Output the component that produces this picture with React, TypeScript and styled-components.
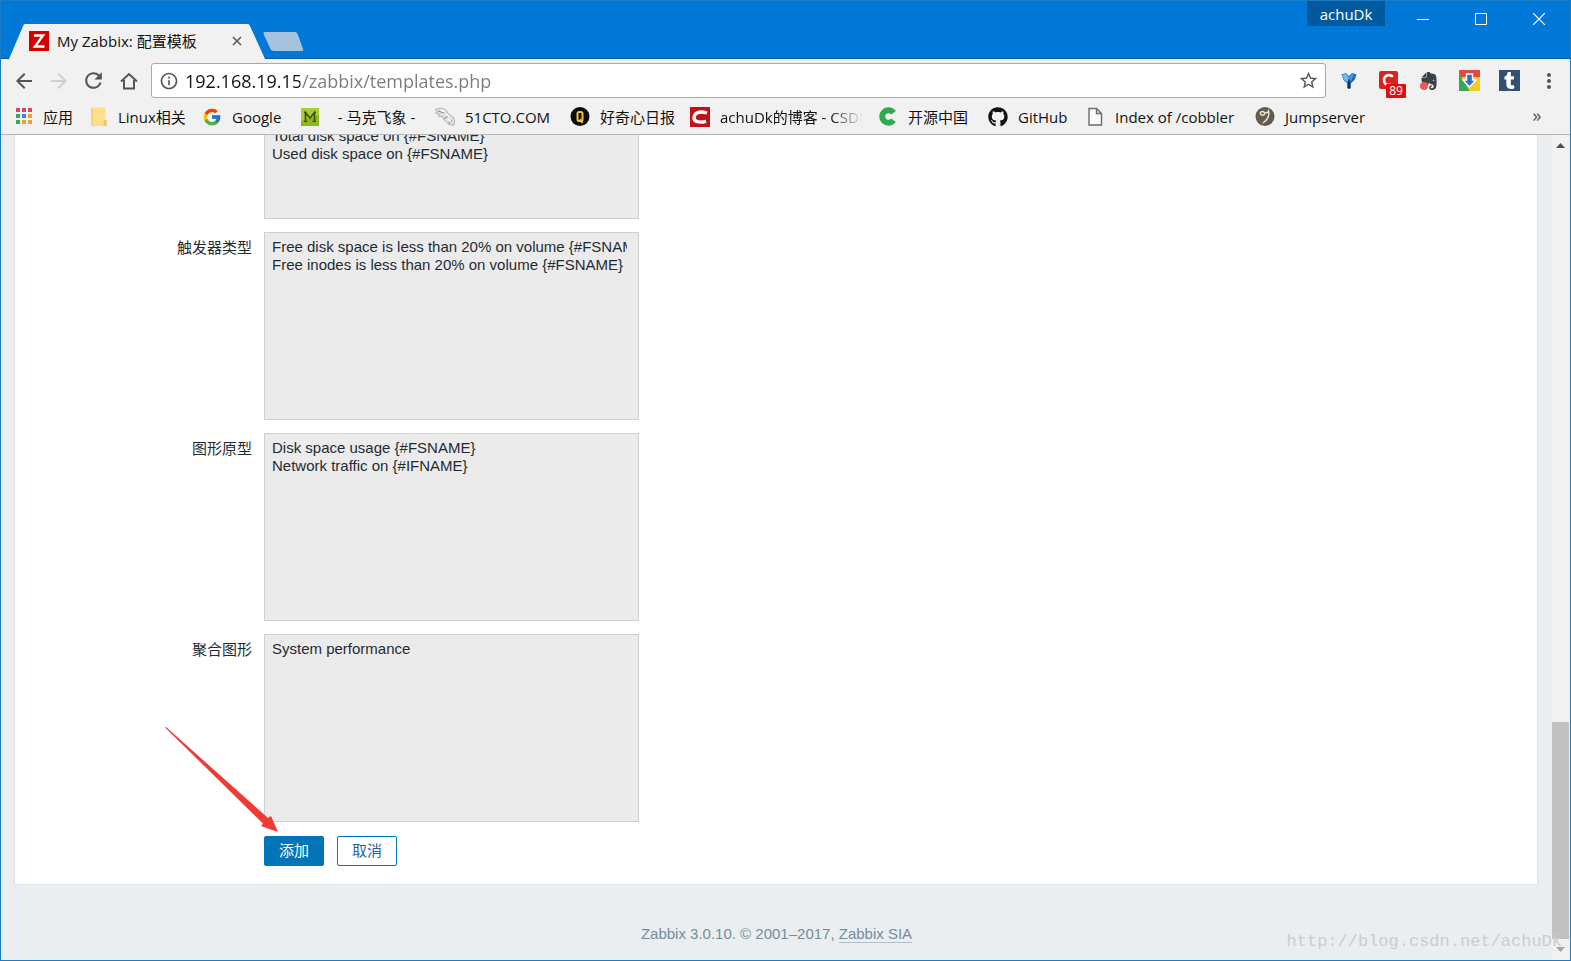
import React from 'react';
import styled, { createGlobalStyle, css } from 'styled-components';
import { MdArrowBack, MdArrowForward, MdRefresh, MdInfoOutline, MdStarBorder, MdMoreVert } from 'react-icons/md';
import { FcGoogle } from 'react-icons/fc';
import { FaGithub, FaTumblr } from 'react-icons/fa';
import { SiEvernote } from 'react-icons/si';

const uiFont = '"Open Sans", "Noto Sans CJK SC", sans-serif';
const pageFont = '"Liberation Sans", "Noto Sans CJK SC", sans-serif';

const GlobalStyle = createGlobalStyle`
  *, *::before, *::after { box-sizing: border-box; }
  body { margin: 0; }
  button, input, select { font: inherit; margin: 0; }
`;

const Window = styled.div`
  display: flex;
  flex-direction: column;
  height: 100vh;
  overflow: hidden;
  border: 1px solid #1a7cc2;
  background: #f1f1f1;
  font: 15px/20px ${uiFont};
  color: #111;
`;

/* ---------- title bar ---------- */

const TitleBar = styled.header`
  display: flex;
  flex: none;
  height: 58px;
  padding: 0 2px 0 8px;
  background: #0078d7;
  border-bottom: 1px solid #0b5a9c;
`;

const Tab = styled.div`
  position: relative;
  display: flex;
  align-items: center;
  align-self: flex-end;
  gap: 8px;
  width: 256px;
  height: 35px;
  margin-bottom: -1px;
  padding: 0 20px 2px;
`;

const TabShape = styled.svg`
  position: absolute;
  inset: 0;
`;

const TabTitle = styled.span`
  position: relative;
  flex: 1;
  white-space: nowrap;
`;

const TabIcon = styled.svg`
  position: relative;
  flex: none;
`;

const BareButton = styled.button`
  display: flex;
  align-items: center;
  justify-content: center;
  flex: none;
  padding: 0;
  border: 0;
  background: none;
  color: #555;
`;

const TabClose = styled(BareButton)`
  position: relative;
  width: 16px;
  height: 16px;
`;

const NewTab = styled(BareButton)`
  align-self: flex-end;
  align-items: flex-start;
  height: 26px;
  margin-left: -2px;
`;

const Spacer = styled.div`
  flex: 1;
`;

const UserButton = styled(BareButton)`
  width: 78px;
  height: 25px;
  margin-right: 9px;
  background: #02599d;
  color: #fff;
`;

const WindowButton = styled(BareButton)`
  width: 58px;
  height: 36px;
`;

/* ---------- toolbar ---------- */

const Toolbar = styled.nav`
  display: flex;
  align-items: center;
  flex: none;
  height: 41px;
  margin-top: 1px;
  padding: 0 1px 0 5px;
`;

const NavButton = styled(BareButton)<{ $faded?: boolean }>`
  width: 35px;
  height: 34px;
  color: ${(p) => (p.$faded ? '#cfcfcf' : '#555')};
`;

const AddressBox = styled.div`
  display: flex;
  align-items: center;
  flex: 1;
  gap: 6px;
  height: 35px;
  margin: 0 3px 0 5px;
  padding: 0 6px 0 7px;
  border: 1px solid #a9a9a9;
  border-radius: 3px;
  background: #fff;
  color: #555;
`;

const AddressInput = styled.input`
  flex: 1;
  min-width: 0;
  height: 30px;
  padding: 0;
  border: 0;
  outline: 0;
  font-size: 18px;
  background: linear-gradient(90deg, #111 115px, #7b7b7b 115px);
  background-clip: text;
  -webkit-background-clip: text;
  -webkit-text-fill-color: transparent;
`;

const ExtensionButton = styled(BareButton)`
  position: relative;
  width: 40px;
  height: 34px;
`;

const Badge = styled.span`
  position: absolute;
  left: 17px;
  top: 20px;
  width: 20px;
  height: 14px;
  border-radius: 1px;
  background: #dc1010;
  color: #fff;
  font-size: 12px;
  line-height: 14px;
  text-align: center;
`;

const RecordingDot = styled.span`
  position: absolute;
  left: 11px;
  bottom: 8px;
  width: 8px;
  height: 8px;
  border-radius: 50%;
  background: #ec5a5e;
`;

const BookmarkBar = styled.nav`
  display: flex;
  align-items: center;
  flex: none;
  gap: 15px;
  height: 34px;
  padding: 0 0 2px 12px;
  border-bottom: 1px solid #b6b6b6;
`;

const Bookmark = styled.a<{ $width: number; $fade?: boolean }>`
  display: flex;
  align-items: center;
  gap: 10px;
  width: ${(p) => p.$width}px;
  color: inherit;
  text-decoration: none;
  white-space: pre;
  ${(p) =>
    p.$fade &&
    css`
      overflow: hidden;
      mask-image: linear-gradient(90deg, #000 140px, transparent 173px);
    `}

  svg {
    flex: none;
    width: 20px;
    height: 20px;
  }
`;

const MoreButton = styled(BareButton)`
  width: 30px;
  margin: 0 18px 0 auto;
  padding-bottom: 4px;
  font-size: 18px;
`;

/* ---------- page ---------- */

const Viewport = styled.div`
  display: flex;
  flex: 1;
  min-height: 0;
  padding-right: 1px;
  background: #ebeef0;
  font: 15px/18px ${pageFont};
  color: #1f2c33;
`;

const Page = styled.div`
  display: flex;
  flex-direction: column;
  justify-content: flex-end;
  flex: 1;
  min-width: 0;
  overflow: hidden;
`;

const Card = styled.main`
  display: flex;
  flex-direction: column;
  flex: none;
  gap: 13px;
  margin: 0 14px 0 13px;
  padding: 0 0 18px;
  border: 1px solid #dfe4e7;
  border-top: 0;
  background: #fff;
`;

const FormRow = styled.div`
  display: flex;
  gap: 12px;
`;

const RowLabel = styled.label`
  width: 237px;
  padding-top: 7px;
  text-align: right;
`;

const ListBox = styled.select<{ $short?: boolean }>`
  width: 375px;
  height: ${(p) => (p.$short ? 98 : 188)}px;
  padding: 5px 11px 5px 5px;
  border: 1px solid #ccd0d2;
  border-radius: 0;
  background: #ebebeb;
  color: #1f2c33;
  opacity: 1;
  overflow: hidden;

  option {
    overflow: hidden;
    color: #1f2c33;
  }
`;

const Actions = styled.div`
  position: relative;
  display: flex;
  gap: 13px;
  margin: 1px 0 0 249px;
`;

const ActionButton = styled.button<{ $primary?: boolean }>`
  width: 60px;
  height: 30px;
  padding: 0;
  border: 1px solid #0275b8;
  border-radius: 2px;
  background: ${(p) => (p.$primary ? '#0275b8' : '#fff')};
  color: ${(p) => (p.$primary ? '#fff' : '#1f65a0')};
`;

const Pointer = styled.svg`
  position: absolute;
  left: -99px;
  bottom: 34px;
  pointer-events: none;
`;

const Footer = styled.footer`
  flex: none;
  height: 75px;
  padding-top: 40px;
  text-align: center;
  color: #768d99;
`;

const FooterLink = styled.a`
  color: inherit;
  text-decoration: none;
  border-bottom: 1px solid #b3bfc6;
`;

const ScrollTrack = styled.div`
  display: flex;
  flex-direction: column;
  align-items: center;
  width: 17px;
  background: #f1f1f1;
`;

const ScrollGap = styled.div`
  flex: 13;
`;

const ScrollThumb = styled.div`
  flex: 5;
  width: 17px;
  background: #c1c1c1;
`;

const ScrollArrow = styled(BareButton)`
  width: 17px;
  height: 21px;
`;

const Watermark = styled.div`
  position: absolute;
  right: 9px;
  bottom: 8px;
  font: 17px/22px "Liberation Mono", monospace;
  color: #c9cdcf;
  pointer-events: none;
`;

/* ---------- icons ---------- */

const appColours = ['#d9455f', '#d9455f', '#d9455f', '#3aa757', '#3b82e8', '#f0a030', '#3aa757', '#f0a030', '#f0a030'];

const AppsIcon = () => (
  <svg viewBox="0 0 20 20">
    {appColours.map((c, i) => (
      <rect key={i} x={3 + (i % 3) * 6} y={1 + Math.floor(i / 3) * 6} width="4" height="4" fill={c} />
    ))}
  </svg>
);

const FolderIcon = () => (
  <svg viewBox="0 0 20 20">
    <path d="M3 1.500Q3 .5 4 .5h12.500q1 0 1 1V13l1.500 1v4q0 1-1 1H4q-1 0-1-1z" fill="#fbe08a" />
    <path d="M3 1.500v16.500q0 1 1 1h3l-2-1.500V1z" fill="#f6d578" />
    <path d="M16 12.500l2.500 1q.5 3-.500 5.500h-2.500z" fill="#f0c65a" />
  </svg>
);

const MIcon = () => (
  <svg viewBox="0 0 20 20">
    <rect x="1" y="1" width="18" height="18" fill="#8fb51f" />
    <path d="M1 1h18v7L1 14z" fill="#a9cc33" />
    <path d="M5.500 14.500V5.500L10 11l4.500-5.500v9" fill="none" stroke="#3a4a12" strokeWidth="1.600" />
    <path d="M4 14.500h3.500M12.500 14.500H16M4 5.500h2M14 5.500h2" stroke="#3a4a12" strokeWidth="1.200" />
  </svg>
);

const CtoIcon = () => (
  <svg viewBox="0 0 20 20">
    <path d="M0 2.500l6-1.500 5 2 2 3.500 5 3.500 2 4.500-1.500 4-4.500-1-4.500-4-1.500-3.500-5-1 1.500-1.500-4-1.500 2-.800z" fill="#dedede" stroke="#a5a5a5" strokeWidth=".8" />
    <path d="M3 4l6 2M9 12l4-3M13.500 17l3.500-4" stroke="#8b8b8b" fill="none" strokeWidth="1" />
    <path d="M11 7l3 2.500M6 3l4 1.500M13 12l3 2" stroke="#fff" strokeWidth="1.600" />
  </svg>
);

const QIcon = () => (
  <svg viewBox="0 0 20 20">
    <circle cx="10" cy="9.500" r="9.500" fill="#0c0c0c" />
    <rect x="7.500" y="5" width="5" height="9" rx="1.500" fill="none" stroke="#f1c232" strokeWidth="2" />
    <path d="M10 12l2.500 4" stroke="#f1c232" strokeWidth="1.800" />
  </svg>
);

const CsdnIcon = () => (
  <svg viewBox="0 0 20 20">
    <rect width="20" height="20" fill="#c20f1a" />
    <path d="M17 6C9 3.500 4.500 6 4 10.500c-.300 4.500 5 5.500 12 3.800" fill="none" stroke="#fff" strokeWidth="3.400" />
  </svg>
);

const OsChinaIcon = () => (
  <svg viewBox="0 0 20 20">
    <path d="M15.500 5.700A6.300 6.300 0 1 0 15.500 13.300" fill="none" stroke="#35a853" strokeWidth="6" />
  </svg>
);

const FileIcon = () => (
  <svg viewBox="0 0 20 20">
    <path d="M4 1.500h7.500l5 5V18H4zM11.500 1.500v5h5" fill="#fafafa" stroke="#6b6b6b" strokeWidth="1.400" />
  </svg>
);

const JumpIcon = () => (
  <svg viewBox="0 0 20 20">
    <circle cx="10" cy="9.500" r="9.500" fill="#625c4c" />
    <path d="M7.500 8C5 8.500 4.500 4.500 7.500 4.500S10 9 7.500 8M10 5.500c1.500.5 3 0 3.500-1.500c1.500 4-1 9-5.500 12" fill="none" stroke="#e8e4da" strokeWidth="1.500" />
  </svg>
);

const FunnelIcon = () => (
  <svg width="18" height="18" viewBox="0 0 18 18">
    <path d="M1.500 2.500L6 1l3 3 3-3 4.500 1.500L14.500 8l-4 3.500V16q-1.500 1.500-3 0v-4.500L3.500 8z" fill="#1b66b4" />
    <path d="M2 3l4-1.500 3 4-1.500 5L4 7.500z" fill="#6fb9ea" />
    <path d="M9 5l3-3.500L14 3 10.500 10z" fill="#3f97dc" />
    <path d="M9 6.500l1.500 5V16q-1.500 1.500-3 0v-4.500z" fill="#0c3764" />
  </svg>
);

const CrimsonIcon = () => (
  <svg width="20" height="20" viewBox="0 0 20 20">
    <rect x="0" y="0" width="19" height="18" rx="2" fill="#d8231f" />
    <path d="M14 5.500C9 2.500 5 5 5 9s3 6 7 4.500" fill="none" stroke="#fff" strokeWidth="2.600" />
  </svg>
);

const ArrowTileIcon = () => (
  <svg width="21" height="21" viewBox="0 0 21 21">
    <rect width="21" height="21" fill="#f6c928" />
    <path d="M0 0h21v7H0z" fill="#e04a3f" />
    <path d="M0 3l10.500 18H0z" fill="#3ba55c" />
    <path d="M7.500 4h6v6h3.500l-6.500 7L4 10h3.500z" fill="#2f6fc4" stroke="#fff" strokeWidth="1.400" />
  </svg>
);

const bookmarks = [
  { label: '应用', icon: <AppsIcon />, width: 60 },
  { label: 'Linux相关', icon: <FolderIcon />, width: 99 },
  { label: 'Google', icon: <FcGoogle />, width: 83 },
  { label: '  - 马克飞象 - ', icon: <MIcon />, width: 120 },
  { label: '51CTO.COM', icon: <CtoIcon />, width: 120 },
  { label: '好奇心日报', icon: <QIcon />, width: 105 },
  { label: 'achuDk的博客 - CSDN', icon: <CsdnIcon />, width: 173, fade: true },
  { label: '开源中国', icon: <OsChinaIcon />, width: 95 },
  { label: 'GitHub', icon: <FaGithub />, width: 82 },
  { label: 'Index of /cobbler', icon: <FileIcon />, width: 155 },
  { label: 'Jumpserver', icon: <JumpIcon />, width: 112 },
];

const lists = [
  { id: 'items', label: '', short: true, options: ['Total disk space on {#FSNAME}', 'Used disk space on {#FSNAME}'] },
  {
    id: 'triggers',
    label: '触发器类型',
    options: ['Free disk space is less than 20% on volume {#FSNAME}', 'Free inodes is less than 20% on volume {#FSNAME}'],
  },
  { id: 'graphs', label: '图形原型', options: ['Disk space usage {#FSNAME}', 'Network traffic on {#IFNAME}'] },
  { id: 'screens', label: '聚合图形', options: ['System performance'] },
];

export default function App() {
  return (
    <Window>
      <GlobalStyle />
      <TitleBar>
        <Tab>
          <TabShape width="256" height="35" viewBox="0 0 256 35">
            <path d="M0 35L14.500 1Q15 0 16.500 0H238.500Q240 0 240.500 1L256 35z" fill="#f1f1f1" />
          </TabShape>
          <TabIcon width="20" height="20" viewBox="0 0 20 20">
            <rect width="20" height="20" fill="#d40000" />
            <path d="M5 4.500h9L6 15.500h9.500" fill="none" stroke="#fff" strokeWidth="2.400" />
          </TabIcon>
          <TabTitle>My Zabbix: 配置模板</TabTitle>
          <TabClose aria-label="Close tab">
            <svg width="10" height="10" viewBox="0 0 10 10">
              <path d="M1 1l8 8M9 1l-8 8" stroke="#555" strokeWidth="1.500" />
            </svg>
          </TabClose>
        </Tab>
        <NewTab aria-label="New tab">
          <svg width="41" height="20" viewBox="0 0 41 20">
            <path d="M1 0h31q2 0 3 3l5 14q1 2-2 2H11q-3 0-4-3L1 3q-1-3 0-3z" fill="#a5c3dc" />
          </svg>
        </NewTab>
        <Spacer />
        <UserButton>achuDk</UserButton>
        <WindowButton aria-label="Minimize">
          <svg width="12" height="12" viewBox="0 0 12 12"><path d="M0 6.500h12" stroke="#fff" /></svg>
        </WindowButton>
        <WindowButton aria-label="Maximize">
          <svg width="12" height="12" viewBox="0 0 12 12"><path d="M.5.5h11v11H.5z" fill="none" stroke="#fff" /></svg>
        </WindowButton>
        <WindowButton aria-label="Close">
          <svg width="12" height="12" viewBox="0 0 12 12"><path d="M0 0l12 12M12 0L0 12" stroke="#fff" strokeWidth="1.200" /></svg>
        </WindowButton>
      </TitleBar>

      <Toolbar>
        <NavButton aria-label="Back"><MdArrowBack size={24} /></NavButton>
        <NavButton aria-label="Forward" $faded><MdArrowForward size={24} /></NavButton>
        <NavButton aria-label="Reload"><MdRefresh size={25} /></NavButton>
        <NavButton aria-label="Home">
          <svg width="18" height="18" viewBox="0 0 18 18">
            <path d="M1 9.500L9 2l8 7.500M4 8v8.500h10V8" fill="none" stroke="#555" strokeWidth="2" />
          </svg>
        </NavButton>
        <AddressBox>
          <MdInfoOutline size={20} />
          <AddressInput aria-label="Address" defaultValue="192.168.19.15/zabbix/templates.php" />
          <MdStarBorder size={21} />
        </AddressBox>
        <ExtensionButton aria-label="Funnel"><FunnelIcon /></ExtensionButton>
        <ExtensionButton aria-label="Notifications">
          <CrimsonIcon />
          <Badge>89</Badge>
        </ExtensionButton>
        <ExtensionButton aria-label="Evernote">
          <SiEvernote size={18} color="#3b4148" />
          <RecordingDot />
        </ExtensionButton>
        <ExtensionButton aria-label="Download"><ArrowTileIcon /></ExtensionButton>
        <ExtensionButton aria-label="Tumblr">
          <svg width="21" height="21" viewBox="0 0 21 21">
            <rect width="21" height="21" fill="#34506e" />
            <FaTumblr x="2" y="2" size={17} color="#fff" />
          </svg>
        </ExtensionButton>
        <ExtensionButton aria-label="Menu"><MdMoreVert size={24} /></ExtensionButton>
      </Toolbar>

      <BookmarkBar>
        {bookmarks.map((b) => (
          <Bookmark key={b.label} href="#" $width={b.width} $fade={b.fade}>
            {b.icon}
            <span>{b.label}</span>
          </Bookmark>
        ))}
        <MoreButton>»</MoreButton>
      </BookmarkBar>

      <Viewport>
        <Page>
          <Card>
            {lists.map((l) => (
              <FormRow key={l.id}>
                <RowLabel htmlFor={l.id}>{l.label}</RowLabel>
                <ListBox id={l.id} multiple disabled $short={l.short}>
                  {l.options.map((o) => (
                    <option key={o}>{o}</option>
                  ))}
                </ListBox>
              </FormRow>
            ))}
            <Actions>
              <ActionButton $primary>添加</ActionButton>
              <ActionButton>取消</ActionButton>
              <Pointer width="114" height="105" viewBox="0 0 114 105">
                <path d="M0 .5L1 0 103 91 106 89 113 105 96 99 98 96.500z" fill="#f23a35" />
              </Pointer>
            </Actions>
          </Card>
          <Footer>
            Zabbix 3.0.10. © 2001–2017, <FooterLink href="#">Zabbix SIA</FooterLink>
          </Footer>
        </Page>
        <ScrollTrack>
          <ScrollArrow aria-label="Scroll up">
            <svg width="9" height="5" viewBox="0 0 9 5"><path d="M0 5l4.500-5L9 5z" fill="#505050" /></svg>
          </ScrollArrow>
          <ScrollGap />
          <ScrollThumb />
          <ScrollArrow aria-label="Scroll down">
            <svg width="9" height="5" viewBox="0 0 9 5"><path d="M0 0l4.500 5L9 0z" fill="#a3a3a3" /></svg>
          </ScrollArrow>
        </ScrollTrack>
      </Viewport>
      <Watermark>http://blog.csdn.net/achuDk</Watermark>
    </Window>
  );
}
